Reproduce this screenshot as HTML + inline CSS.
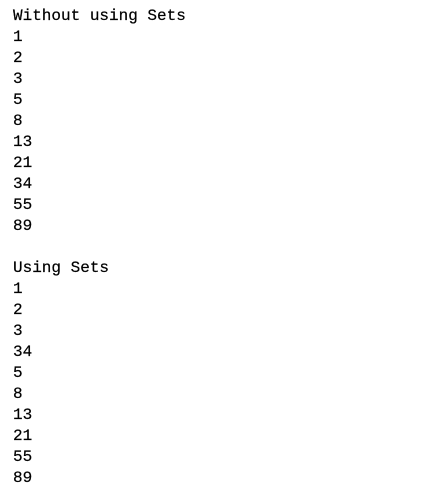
<!DOCTYPE html>
<html><head><style>
html,body{margin:0;padding:0;background:#fff;}
pre{margin:0;position:absolute;left:13px;top:6px;font-family:"Liberation Mono",monospace;font-size:16px;line-height:21px;color:#000;-webkit-text-stroke:0.2px #000;}
</style></head><body>
<pre>Without using Sets
1
2
3
5
8
13
21
34
55
89

Using Sets
1
2
3
34
5
8
13
21
55
89</pre>
</body></html>
